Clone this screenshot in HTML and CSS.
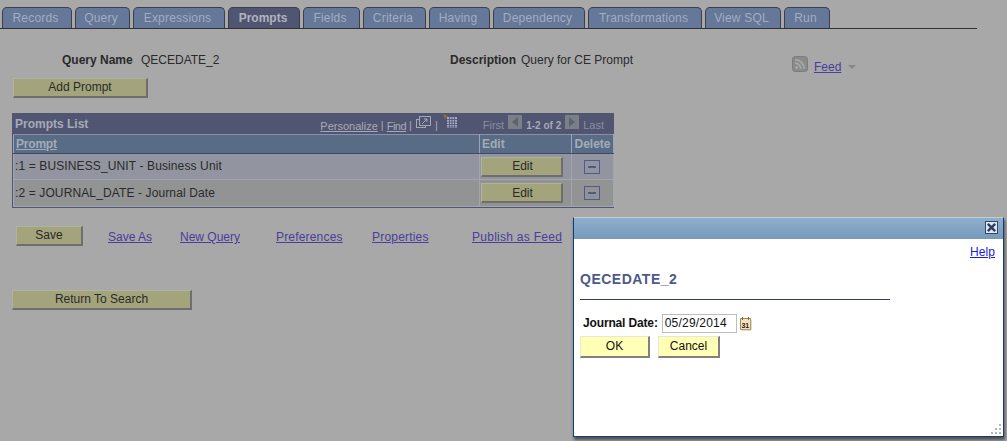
FILE: index.html
```html
<!DOCTYPE html>
<html lang="en">
<head>
<meta charset="utf-8">
<title>Query Manager - Prompts</title>
<link rel="stylesheet" href="styles.css">
</head>
<body>
<main class="page">
  <nav class="tabs">
    <a class="tab w70">Records</a>
    <a class="tab w55">Query</a>
    <a class="tab w92">Expressions</a>
    <a class="tab active w72">Prompts</a>
    <a class="tab w57">Fields</a>
    <a class="tab w63">Criteria</a>
    <a class="tab w61">Having</a>
    <a class="tab w92">Dependency</a>
    <a class="tab w114">Transformations</a>
    <a class="tab w76">View SQL</a>
    <a class="tab w46">Run</a>
  </nav>

  <section class="info">
    <b class="lbl name-lbl">Query Name</b>
    <span class="name-val">QECEDATE_2</span>
    <b class="lbl desc-lbl">Description</b>
    <span class="desc-val">Query for CE Prompt</span>
    <span class="feed">
      <svg class="rss" width="16" height="16" viewBox="0 0 16 16"><rect x="0.5" y="0.5" width="15" height="15" rx="3" fill="#8a8a8a" stroke="#7c7c7c"/><circle cx="4.6" cy="11.4" r="1.5" fill="#a6a6a6"/><path d="M3 7.2a5.8 5.8 0 0 1 5.8 5.8M3 3.8a9.2 9.2 0 0 1 9.2 9.2" fill="none" stroke="#a6a6a6" stroke-width="1.9"/></svg>
      <a class="link feed-link">Feed</a>
      <span class="caret"></span>
    </span>
  </section>

  <button class="btn add">Add Prompt</button>

  <section class="grid">
    <div class="grid-title">
      <b>Prompts List</b>
      <div class="grid-nav">
        <a class="nav-link">Personalize</a><span class="sep">|</span><a class="nav-link find">Find</a><span class="sep">|</span>
        <svg class="zoomicon" width="15" height="13" viewBox="0 0 15 13"><rect x="0.5" y="3.5" width="9" height="8" fill="none" stroke="#a4a8b4"/><rect x="3.5" y="0.5" width="11" height="9" fill="#505672" stroke="#a4a8b4"/><path d="M6 8l5-5M8 3h3v3" fill="none" stroke="#a4a8b4"/></svg>
        <span class="sep">|</span>
        <svg class="gridicon" width="14" height="15" viewBox="0 0 14 15"><path d="M0 0l5 2-3 3z" fill="#9c6a34"/><path d="M4 3h10v11H4z" fill="#a3a9c4"/><path d="M6.5 3v11M9 3v11M11.5 3v11M4 5.5h10M4 8h10M4 10.5h10M4 13h10" stroke="#505672" stroke-width="0.8"/></svg>
        <span class="dim first">First</span>
        <span class="arrowbox"><span class="tri left"></span></span>
        <b class="count">1-2 of 2</b>
        <span class="arrowbox"><span class="tri right"></span></span>
        <span class="dim">Last</span>
      </div>
    </div>
    <table class="gridtable">
      <thead>
        <tr><th class="c-prompt"><a class="sort">Prompt</a></th><th class="c-edit">Edit</th><th class="c-del">Delete</th></tr>
      </thead>
      <tbody>
        <tr class="odd">
          <td>:1 = BUSINESS_UNIT - Business Unit</td>
          <td class="mid"><button class="btn edit">Edit</button></td>
          <td class="mid"><span class="minus"></span></td>
        </tr>
        <tr class="even">
          <td>:2 = JOURNAL_DATE - Journal Date</td>
          <td class="mid"><button class="btn edit">Edit</button></td>
          <td class="mid"><span class="minus"></span></td>
        </tr>
      </tbody>
    </table>
  </section>

  <section class="actions">
    <button class="btn save">Save</button>
    <a class="link a1">Save As</a>
    <a class="link a2">New Query</a>
    <a class="link a3">Preferences</a>
    <a class="link a4">Properties</a>
    <a class="link a5">Publish as Feed</a>
  </section>

  <button class="btn back">Return To Search</button>
</main>

<aside class="modal">
  <header class="modal-bar">
    <span class="close"><svg width="11" height="11" viewBox="0 0 12 12"><path d="M2 2l8 8M10 2l-8 8" stroke="#2c3f63" stroke-width="2.6"/></svg></span>
  </header>
  <div class="modal-body">
    <div class="help-row"><a class="help">Help</a></div>
    <h2 class="modal-title">QECEDATE_2</h2>
    <hr class="rule">
    <div class="date-row">
      <b class="date-lbl">Journal Date:</b>
      <input class="date-input" type="text" value="05/29/2014">
      <svg class="cal" width="13" height="15" viewBox="0 0 13 15"><path d="M1.5 2.5h10v11h-10z" fill="#f3e2bd" stroke="#a08a5e"/><path d="M3.5 1v3M9.5 1v3" stroke="#7a6a48"/><path d="M12 4v10H3" fill="none" stroke="#c9b280"/><text x="2.4" y="11.5" class="cal-txt">31</text></svg>
    </div>
    <div class="modal-btns">
      <button class="btn-y ok">OK</button>
      <button class="btn-y cancel">Cancel</button>
    </div>
  </div>
  <svg class="grip" width="12" height="12" viewBox="0 0 12 12"><path d="M9 1h2v2H9zM5 5h2v2H5zM9 5h2v2H9zM1 9h2v2H1zM5 9h2v2H5zM9 9h2v2H9z" fill="#b4b4b4"/></svg>
</aside>
</body>
</html>
```
FILE: styles.css
```css
* { box-sizing: border-box; }
html, body { margin: 0; height: 441px; overflow: hidden; }
body { background: #a8a8a8; font: 12px "Liberation Sans", Arial, sans-serif; color: #2a2a2a; position: relative; }
.page { padding: 7px 0 0 0; height: 441px; }

.tabs { display: flex; gap: 3px; width: 977px; height: 22px; padding-left: 2px; border-bottom: 1px solid #333; }
.tab { height: 21px; padding-right: 3px; background: #65789a; border: 1px solid #3a3f4a; border-bottom: 0; border-radius: 5px 5px 0 0; color: #a3adbd; text-align: center; line-height: 21px; font-size: 12px; letter-spacing: .2px; }
.tab.active { padding-right: 2px; background: #505672; color: #b0b3bf; font-weight: bold; letter-spacing: 0; }
.w70 { width: 70px; } .w55 { width: 55px; } .w92 { width: 92px; } .w72 { width: 72px; }
.w57 { width: 57px; } .w63 { width: 63px; } .w61 { width: 61px; } .w114 { width: 114px; }
.w76 { width: 76px; } .w46 { width: 46px; }

.info { position: relative; height: 49px; }
.lbl { color: #2a2a2a; }
.name-lbl, .name-val, .desc-lbl, .desc-val, .feed { position: absolute; }
.name-lbl { left: 62px; top: 24px; }
.name-val { left: 141px; top: 24px; }
.desc-lbl { left: 450px; top: 24px; }
.desc-val { left: 521px; top: 24px; }
.feed { left: 792px; top: 27px; display: flex; align-items: flex-start; }
.rss { display: block; }
.link { color: #4a3d9c; text-decoration: underline; }
.feed-link { margin: 4px 0 0 6px; }
.caret { margin: 9px 0 0 7px; border: 4px solid transparent; border-top: 4px solid #888; border-bottom: 0; }

.btn { display: block; padding: 0 0 2px; background: #a3a37c; border: 0; border-top: 1px solid #b2b2a0; border-left: 1px solid #b2b2a0; border-right: 2px solid #6e6e6e; border-bottom: 2px solid #6e6e6e; font: 12px "Liberation Sans", Arial, sans-serif; color: #2a2a2a; }
.add { width: 135px; height: 20px; margin-left: 13px; }

.grid { width: 602px; height: 95px; margin: 15px 0 0 12px; border: 1px solid #4f5573; border-top: 0; background: #505672; }
.grid-title { height: 21px; display: flex; justify-content: space-between; color: #a7aab6; }
.grid-title > b { padding: 4px 0 0 2px; font-size: 12px; }
.grid-nav { display: flex; align-items: flex-start; font-size: 11px; padding: 0 9px 0 0; color: #a7aab6; }
.nav-link { text-decoration: underline; margin-top: 7px; }
.find { letter-spacing: -.5px; }
.sep { margin: 6px 3px 0; }
.zoomicon { margin: 3px 1px 0 1px; }
.gridicon { margin: 1px 0 0 2px; }
.dim { color: #8a8ea0; margin-top: 6px; font-size: 11px; }
.first { margin-left: 26px; }
.arrowbox { width: 14px; height: 14px; background: #7b8088; margin: 2px 4px 0; display: flex; align-items: center; justify-content: center; }
.tri { border: 5px solid transparent; }
.tri.left { border-right: 6px solid #5e6370; border-left: 0; }
.tri.right { border-left: 6px solid #5e6370; border-right: 0; }
.count { margin: 7px 0 0; font-size: 10px; color: #a7aab6; }

.gridtable { width: 600px; height: 73px; border-collapse: collapse; table-layout: fixed; }
.gridtable th { height: 19px; background: #586c85; border: 1px solid #9ea3b5; border-bottom: 1px solid #42496b; border-top: 1px solid #8b90a8; text-align: left; padding: 0 2px; font-size: 12px; font-weight: bold; color: #a4abb8; }
.c-prompt { width: 466px; }
.c-edit { width: 92px; }
.c-del { width: 42px; text-align: center !important; }
.sort { text-decoration: underline; letter-spacing: -.2px; }
.gridtable td { padding: 0 0 0 1px; border: 1px solid #a3a6ac; border-top-color: #a5a8ad; font-size: 12px; color: #2a2a2a; letter-spacing: .12px; }
.odd td { height: 26px; padding-bottom: 2px; background: #92959f; }
.even td { height: 27px; background: #929493; }
.gridtable .mid { padding: 0; letter-spacing: 0; }
.edit { width: 82px; height: 20px; margin: 0 0 0 1px; padding: 0 0 0 2px; }
.minus { display: block; width: 16px; height: 14px; margin: 0 auto; position: relative; left: -1px; border: 1px solid #4f5b8c; background: linear-gradient(#4f5b8c, #4f5b8c) center / 8px 2px no-repeat; }

.actions { position: relative; height: 20px; margin-top: 18px; }
.actions .link { position: absolute; top: 4px; }
.save { width: 67px; height: 20px; margin-left: 16px; }
.a1 { left: 108px; } .a2 { left: 180px; } .a3 { left: 276px; letter-spacing: .18px; } .a4 { left: 372px; letter-spacing: .2px; } .a5 { left: 472px; letter-spacing: .27px; }
.back { width: 180px; height: 20px; margin: 44px 0 0 12px; }

.modal { position: absolute; left: 573px; top: 217px; width: 431px; height: 220px; background: #fff; border: 1px solid #0f3f78; border-top: 1px solid #c5ccd4; box-shadow: 1px 3px 3px rgba(40, 40, 40, .7); }
.modal-bar { height: 21px; background: linear-gradient(#8eafcc, #7799bd); position: relative; }
.close { position: absolute; right: 5px; top: 3px; width: 13px; height: 13px; background: #dfe6ee; border: 1px solid #32466c; display: flex; align-items: center; justify-content: center; }
.help-row { text-align: right; padding: 6px 8px 0 0; height: 20px; }
.help { color: #1a1ae0; text-decoration: underline; font-size: 12px; letter-spacing: .1px; }
.modal-title { margin: 12px 0 0 6px; font: bold 14px "Liberation Sans", Arial, sans-serif; letter-spacing: .5px; color: #4d5a89; }
.rule { width: 310px; height: 1px; margin: 12px 0 0 6px; border: 0; background: #343a60; }
.date-row { display: flex; align-items: center; margin: 14px 0 0 9px; height: 18px; }
.date-lbl { color: #111; letter-spacing: -.15px; }
.date-input { width: 75px; height: 19px; margin-left: 4px; padding: 0 2px; border: 1px solid #bdbdbd; background: #fff; font: 12px "Liberation Sans", Arial, sans-serif; letter-spacing: .2px; color: #111; }
.cal { margin-left: 2px; }
.cal-txt { font: bold 7px "Liberation Sans", Arial, sans-serif; fill: #222; }
.modal-btns { display: flex; gap: 8px; margin: 4px 0 0 6px; }
.btn-y { height: 22px; padding: 0 0 1px; background: #ffffb5; border: 0; border-top: 1px solid #e8e8d0; border-left: 1px solid #e8e8d0; border-right: 2px solid #808080; border-bottom: 2px solid #808080; font: 12px "Liberation Sans", Arial, sans-serif; color: #111; }
.ok { width: 70px; }
.cancel { width: 62px; }
.grip { position: absolute; right: 1px; bottom: 1px; }
```
